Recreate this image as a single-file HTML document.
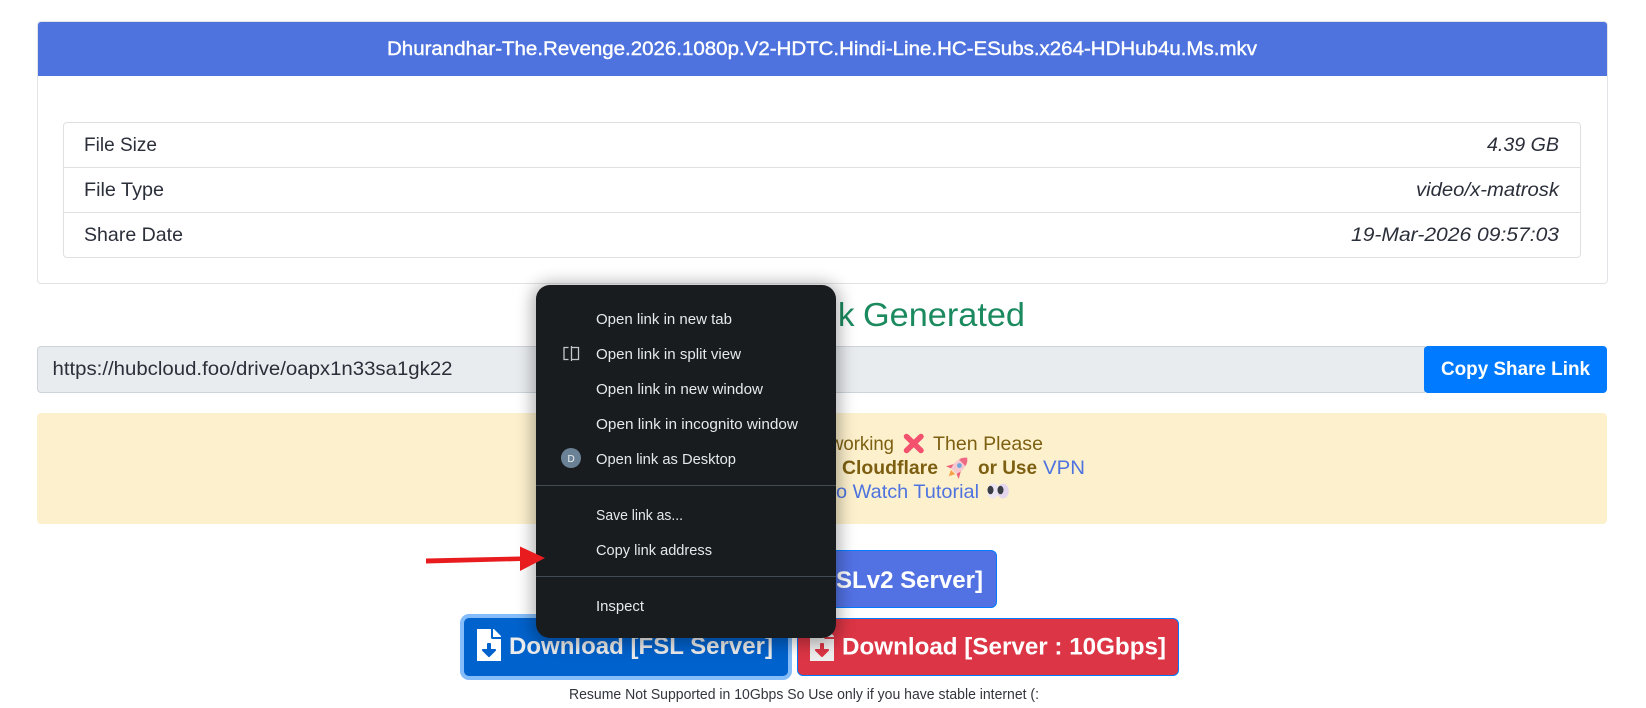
<!DOCTYPE html>
<html lang="en">
<head>
<meta charset="utf-8">
<title>Share Link Generated</title>
<style>
html,body{margin:0;padding:0;background:#fff;width:1646px;height:708px;overflow:hidden}
body{position:relative;font-family:"Liberation Sans",sans-serif}
.b{position:absolute;box-sizing:border-box}
svg{position:absolute;left:0;top:0}
text{font-family:"Liberation Sans",sans-serif}
</style>
</head>
<body>
<div class="b" style="left:37px;top:21px;width:1571px;height:263px;border:1px solid #e1e3e6;border-radius:4px"></div>
<div class="b" style="left:38px;top:22px;width:1569px;height:54px;background:#4e73df;border-radius:3px 3px 0 0"></div>
<div class="b" style="left:63px;top:122px;width:1518px;height:136px;border:1px solid #dfe0e2;border-radius:4px"></div>
<div class="b" style="left:64px;top:167px;width:1516px;height:1px;background:#dfe0e2"></div>
<div class="b" style="left:64px;top:212px;width:1516px;height:1px;background:#dfe0e2"></div>

<div class="b" style="left:37px;top:346px;width:1388px;height:47px;background:#e9ecef;border:1px solid #ced4da;border-radius:4px 0 0 4px"></div>
<div class="b" style="left:1424px;top:346px;width:183px;height:47px;background:#007bff;border-radius:4px"></div>

<div class="b" style="left:37px;top:413px;width:1570px;height:111px;background:#fdf1cd;border-radius:4px"></div>

<div class="b" style="left:540px;top:550px;width:457px;height:58px;background:#5272e4;border:1px solid #007bff;border-radius:6px"></div>
<div class="b" style="left:460px;top:614px;width:332px;height:66px;background:#0062cc;border:4px solid #85bdfa;border-radius:9px"></div>
<div class="b" style="left:797px;top:618px;width:382px;height:58px;background:#dc3545;border:1px solid #007bff;border-radius:6px"></div>

<svg width="1646" height="708" viewBox="0 0 1646 708" style="z-index:1">
  <text x="387" y="55" font-size="19.5" fill="#fff" stroke="#fff" stroke-width=".4" textLength="870" lengthAdjust="spacingAndGlyphs">Dhurandhar-The.Revenge.2026.1080p.V2-HDTC.Hindi-Line.HC-ESubs.x264-HDHub4u.Ms.mkv</text>

  <g font-size="19.5" fill="#2b2f3a">
    <text x="84" y="151" textLength="73" lengthAdjust="spacingAndGlyphs">File Size</text>
    <text x="84" y="196" textLength="80" lengthAdjust="spacingAndGlyphs">File Type</text>
    <text x="84" y="241" textLength="99" lengthAdjust="spacingAndGlyphs">Share Date</text>
    <text x="1487" y="151" font-style="italic" textLength="72" lengthAdjust="spacingAndGlyphs">4.39 GB</text>
    <text x="1416" y="196" font-style="italic" textLength="143" lengthAdjust="spacingAndGlyphs">video/x-matrosk</text>
    <text x="1351" y="241" font-style="italic" textLength="208" lengthAdjust="spacingAndGlyphs">19-Mar-2026 09:57:03</text>
    <text x="52.5" y="375" textLength="400" lengthAdjust="spacingAndGlyphs">https://hubcloud.foo/drive/oapx1n33sa1gk22</text>
  </g>

  <text x="640" y="326" font-size="33" fill="#1b8a5f" textLength="190" lengthAdjust="spacingAndGlyphs">Share Link</text>
  <text x="838" y="326" font-size="33" fill="#1b8a5f">k</text>
  <text x="863" y="326" font-size="33" fill="#1b8a5f" textLength="162" lengthAdjust="spacingAndGlyphs">Generated</text>

  <text x="1441" y="375" font-size="19" font-weight="700" fill="#fff" textLength="149" lengthAdjust="spacingAndGlyphs">Copy Share Link</text>

  <g font-size="19.5" fill="#7d5f12">
    <text x="830" y="450" textLength="64" lengthAdjust="spacingAndGlyphs">working</text>
    <text x="933" y="450" textLength="110" lengthAdjust="spacingAndGlyphs">Then Please</text>
    <text x="842" y="474" font-weight="700" textLength="96" lengthAdjust="spacingAndGlyphs">Cloudflare</text>
    <text x="978" y="474" font-weight="700" textLength="59" lengthAdjust="spacingAndGlyphs">or Use</text>
  </g>
  <g font-size="19.5" fill="#4e73df">
    <text x="1043" y="474" textLength="42" lengthAdjust="spacingAndGlyphs">VPN</text>
    <text x="836" y="498" textLength="143" lengthAdjust="spacingAndGlyphs">o Watch Tutorial</text>
  </g>

  <!-- cross mark -->
  <path d="M906.5 436.5 L921 450.5 M921 436.5 L906.5 450.5" stroke="#f4516e" stroke-width="5.500" stroke-linecap="round" fill="none"/>
  <!-- rocket -->
  <g transform="translate(958 467) rotate(45)">
    <path d="M0 -13 C5 -9 6 -3 5 6 L-5 6 C-6 -3 -5 -9 0 -13Z" fill="#f6c9cf"/>
    <path d="M0 -13 C2.5 -11 4 -9 4.5 -6 L-4.5 -6 C-4 -9 -2.500 -11 0 -13Z" fill="#ee6a84"/>
    <path d="M-5 1 L-9 8 L-4 6Z M5 1 L9 8 L4 6Z" fill="#ee5f7c"/>
    <circle cx="0" cy="-2" r="2.400" fill="#6fa8dc"/>
    <path d="M-3 7 L0 13 L3 7Z" fill="#f7a04a"/>
  </g>
  <!-- eyes -->
  <g>
    <ellipse cx="993" cy="491" rx="5.800" ry="7.500" fill="#ece5f2"/>
    <ellipse cx="1003" cy="491" rx="5.800" ry="7.500" fill="#e4d6ec"/>
    <ellipse cx="990.500" cy="490" rx="3" ry="4.300" fill="#3a3d45"/>
    <ellipse cx="1000.500" cy="490" rx="3" ry="4.300" fill="#3a3d45"/>
  </g>

  <g font-weight="700" font-size="24" fill="#fff">
    <text x="836" y="588" textLength="147" lengthAdjust="spacingAndGlyphs">SLv2 Server]</text>
    <text x="509" y="654" fill="#ececec" textLength="264" lengthAdjust="spacingAndGlyphs">Download [FSL Server]</text>
    <text x="842" y="654.500" textLength="324" lengthAdjust="spacingAndGlyphs">Download [Server : 10Gbps]</text>
  </g>
  <svg x="477" y="629" width="24" height="32" viewBox="0 0 384 512"><path fill="#fff" d="M224 136V0H0v512h384V160H248c-13.200 0-24-10.800-24-24zm76.450 211.360l-96.420 95.700c-6.650 6.610-17.390 6.610-24.040 0l-96.420-95.700C73.420 337.290 80.540 320 94.820 320H160v-80c0-8.840 7.160-16 16-16h32c8.840 0 16 7.160 16 16v80h65.180c14.280 0 21.400 17.290 11.270 27.360zM377 105L279.100 7c-4.500-4.500-10.600-7-17-7H256v128h128v-6.100c0-6.300-2.500-12.400-7-16.900z"/></svg>
  <svg x="810" y="629" width="24" height="32" viewBox="0 0 384 512"><path fill="#eeeeee" d="M224 136V0H0v512h384V160H248c-13.200 0-24-10.800-24-24zm76.450 211.360l-96.420 95.700c-6.650 6.610-17.390 6.610-24.040 0l-96.420-95.700C73.420 337.290 80.540 320 94.820 320H160v-80c0-8.840 7.160-16 16-16h32c8.840 0 16 7.160 16 16v80h65.180c14.280 0 21.400 17.290 11.270 27.360zM377 105L279.100 7c-4.500-4.500-10.600-7-17-7H256v128h128v-6.100c0-6.300-2.500-12.400-7-16.900z"/></svg>

  <text x="569" y="699" font-size="14.400" fill="#33353d" textLength="470" lengthAdjust="spacingAndGlyphs">Resume Not Supported in 10Gbps So Use only if you have stable internet (:</text>
</svg>

<!-- context menu -->
<div class="b" style="left:536px;top:285px;width:300px;height:353px;background:#181c1f;border-radius:14px;box-shadow:0 2px 16px 4px rgba(0,0,0,.3);z-index:2"></div>
<svg width="1646" height="708" viewBox="0 0 1646 708" style="z-index:3">
  <g font-size="14.500" fill="#e6e8ea">
    <text x="596" y="324" textLength="136" lengthAdjust="spacingAndGlyphs">Open link in new tab</text>
    <text x="596" y="359" textLength="145" lengthAdjust="spacingAndGlyphs">Open link in split view</text>
    <text x="596" y="394" textLength="167" lengthAdjust="spacingAndGlyphs">Open link in new window</text>
    <text x="596" y="429" textLength="202" lengthAdjust="spacingAndGlyphs">Open link in incognito window</text>
    <text x="596" y="464" textLength="140" lengthAdjust="spacingAndGlyphs">Open link as Desktop</text>
    <text x="596" y="520" textLength="87" lengthAdjust="spacingAndGlyphs">Save link as...</text>
    <text x="596" y="555" textLength="116" lengthAdjust="spacingAndGlyphs">Copy link address</text>
    <text x="596" y="611" textLength="48" lengthAdjust="spacingAndGlyphs">Inspect</text>
  </g>
  <rect x="536" y="485" width="300" height="1" fill="#414b52"/>
  <rect x="536" y="576" width="300" height="1" fill="#414b52"/>
  <!-- split view icon -->
  <path d="M568.500 347.500 H564 V359.500 H568.500 M571.500 346 V361 M571.500 347.500 H578.500 V359.500 H571.500" fill="none" stroke="#c4c7ca" stroke-width="1.300"/>
  <!-- avatar -->
  <circle cx="571" cy="458" r="10" fill="#6b8296"/>
  <text x="567.500" y="462" font-size="10" fill="#eef1f3">D</text>
  <!-- annotation arrow -->
  <path d="M426 558.500 L520 556.500 L520 546.500 L545 558 L520 571 L520 561 L426 563.500Z" fill="#e81c1f"/>
</svg>
</body>
</html>
